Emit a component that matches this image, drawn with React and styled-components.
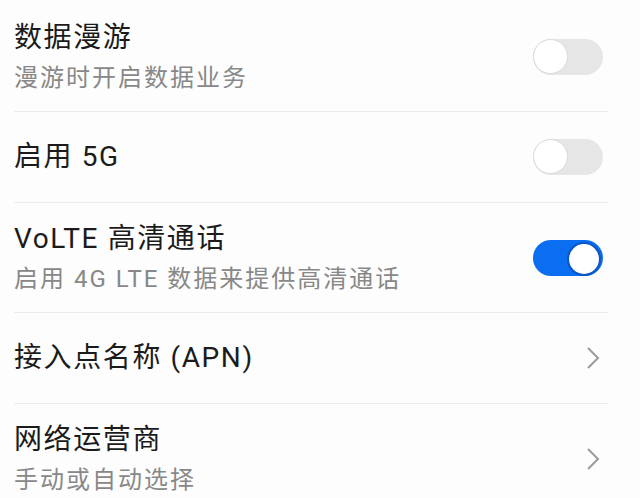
import React from 'react';
import styled, { createGlobalStyle } from 'styled-components';

const GlobalStyle = createGlobalStyle`
  html, body {
    margin: 0;
    padding: 0;
    background: #fdfdfd;
  }
  body {
    font-family: Roboto, "Noto Sans CJK SC", sans-serif;
    overflow: hidden;
  }
`

const Page = styled.div`
  width: 640px;
  height: 498px;
  overflow: hidden;
  background: #fcfdfc;
  padding-top: 2px;
  box-sizing: border-box;
`

const Row = styled.div`
  display: flex;
  align-items: center;
  justify-content: space-between;
  margin: 0 32px 0 14px;
  min-height: ${p => (p.tall ? 109 : 90)}px;
  border-bottom: 1px solid #ececec;
  box-sizing: content-box;
`

const TextBox = styled.div`
  display: flex;
  flex-direction: column;
`

const Title = styled.div`
  font-size: 28px;
  line-height: 38px;
  letter-spacing: 1.6px;
  color: #1b1b1b;
`

const Subtitle = styled.div`
  margin-top: 4px;
  font-size: 24px;
  line-height: 34px;
  letter-spacing: 2px;
  color: #888;
`

const Track = styled.div`
  position: relative;
  width: 70px;
  height: 36px;
  margin-right: 5px;
  border-radius: 18px;
  background: ${p => (p.on ? '#0b6df0' : '#e5e6e5')};
  flex-shrink: 0;
`

const Knob = styled.div`
  position: absolute;
  top: ${p => (p.on ? 2 : 0)}px;
  left: ${p => (p.on ? 34 : 0)}px;
  width: ${p => (p.on ? 30 : 33)}px;
  height: ${p => (p.on ? 30 : 33)}px;
  border-radius: 50%;
  background: #fff;
  border: ${p => (p.on ? '2px solid #0a56c4' : '1.5px solid #d9dad9')};
`

const Chevron = styled.svg`
  width: 14px;
  height: 24px;
  margin-right: 8px;
  flex-shrink: 0;
`

function Toggle({ on }) {
  return (
    <Track on={on ? 1 : 0}>
      <Knob on={on ? 1 : 0} />
    </Track>
  )
}

function Arrow() {
  return (
    <Chevron viewBox="0 0 14 24">
      <path d="M2 2 L12 12 L2 22" fill="none" stroke="#9b9b9b" strokeWidth="2" />
    </Chevron>
  )
}

const items = [
  { title: '数据漫游', sub: '漫游时开启数据业务', toggle: false },
  { title: '启用 5G', toggle: false },
  { title: 'VoLTE 高清通话', sub: '启用 4G LTE 数据来提供高清通话', toggle: true },
  { title: '接入点名称 (APN)', arrow: true },
  { title: '网络运营商', sub: '手动或自动选择', arrow: true },
]

export default function App() {
  return (
    <Page>
      <GlobalStyle />
      {items.map(item => (
        <Row key={item.title} tall={item.sub ? 1 : 0}>
          <TextBox>
            <Title>{item.title}</Title>
            {item.sub && <Subtitle>{item.sub}</Subtitle>}
          </TextBox>
          {item.arrow ? <Arrow /> : <Toggle on={item.toggle} />}
        </Row>
      ))}
    </Page>
  )
}
